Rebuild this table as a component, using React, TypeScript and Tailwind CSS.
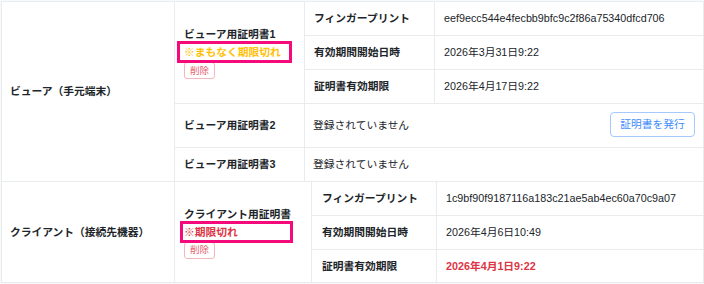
import React from 'react';

type Field = { label: string; value: string; danger?: boolean };

type Cert = {
  name: string;
  notice?: { text: string; tone: 'warn' | 'expired' };
  fields?: Field[];
};

const viewerCerts: Cert[] = [
  {
    name: 'ビューア用証明書1',
    notice: { text: '※まもなく期限切れ', tone: 'warn' },
    fields: [
      { label: 'フィンガープリント', value: 'eef9ecc544e4fecbb9bfc9c2f86a75340dfcd706' },
      { label: '有効期間開始日時', value: '2026年3月31日9:22' },
      { label: '証明書有効期限', value: '2026年4月17日9:22' },
    ],
  },
  { name: 'ビューア用証明書2' },
  { name: 'ビューア用証明書3' },
];

const clientCert: Cert = {
  name: 'クライアント用証明書',
  notice: { text: '※期限切れ', tone: 'expired' },
  fields: [
    { label: 'フィンガープリント', value: '1c9bf90f9187116a183c21ae5ab4ec60a70c9a07' },
    { label: '有効期間開始日時', value: '2026年4月6日10:49' },
    { label: '証明書有効期限', value: '2026年4月1日9:22', danger: true },
  ],
};

const font = { fontFamily: '"Liberation Sans", "Noto Sans CJK JP", sans-serif' };

function DeleteButton() {
  return (
    <button className="flex h-[17px] w-[31px] items-center justify-center rounded-[3px] border border-[#f3b7bd] text-[9.5px] leading-none text-[#e4606d]">
      削除
    </button>
  );
}

// 証明書名 + 状態 + 削除ボタン
function CertName({ cert, markClass }: { cert: Cert; markClass: string }) {
  return (
    <div className="flex flex-col items-start">
      <div className="h-[16px] font-bold leading-[16px]">{cert.name}</div>
      {cert.notice && (
        <div
          className={
            'relative mt-[2px] h-[16px] font-bold leading-[16px] ' +
            (cert.notice.tone === 'warn' ? 'text-[#ffc107]' : 'text-[#dc3545]')
          }
        >
          {cert.notice.text}
          <div className={'pointer-events-none absolute border-[3px] border-[#f50a7c] ' + markClass} />
        </div>
      )}
      <div className="mt-[2px]">
        <DeleteButton />
      </div>
    </div>
  );
}

function FieldRows({ fields, labelWidth }: { fields: Field[]; labelWidth: string }) {
  return (
    <div className="flex flex-1 flex-col">
      {fields.map((f, i) => {
        const last = i === fields.length - 1;
        return (
          <div
            key={f.label}
            className={'flex ' + (last ? 'flex-1' : 'h-[34px] border-b border-[#e9ecef]')}
          >
            <div className={'flex items-center border-r border-[#e9ecef] pl-[9px] font-bold ' + labelWidth}>
              {f.label}
            </div>
            <div
              className={
                'flex flex-1 items-center pl-[9px] ' + (f.danger ? 'font-bold text-[#dc3545]' : '')
              }
            >
              {f.value}
            </div>
          </div>
        );
      })}
    </div>
  );
}

export default function App() {
  return (
    <div className="h-[284px] w-[704px] bg-[#f8f9fa] pt-px pl-px" style={font}>
      <div className="w-[703px] border border-[#e9ecef] bg-white text-[10.75px] text-[#212529]">
        {/* ビューア */}
        <div className="flex border-b border-[#e9ecef]">
          <div className="flex w-[173px] items-center border-r border-[#e9ecef] pl-[8px] font-bold">
            ビューア（手元端末）
          </div>
          <div className="flex flex-1 flex-col">
            <div className="flex h-[102px] border-b border-[#e9ecef]">
              <div className="flex w-[130px] items-center border-r border-[#e9ecef] pl-[9px]">
                <CertName cert={viewerCerts[0]} markClass="-left-[7px] -top-[3px] h-[22px] w-[115px]" />
              </div>
              <FieldRows fields={viewerCerts[0].fields!} labelWidth="w-[130px]" />
            </div>
            <div className="flex h-[44px] border-b border-[#e9ecef]">
              <div className="flex w-[130px] items-center border-r border-[#e9ecef] pl-[9px] font-bold">
                {viewerCerts[1].name}
              </div>
              <div className="flex flex-1 items-center justify-between pl-[8px] pr-[8px]">
                <span>登録されていません</span>
                <button className="mb-[2px] h-[25px] w-[85px] rounded-[4px] border border-[#a6c9fb] text-[10.75px] text-[#3d8bfd]">
                  証明書を発行
                </button>
              </div>
            </div>
            <div className="flex h-[33px]">
              <div className="flex w-[130px] items-center border-r border-[#e9ecef] pl-[9px] font-bold">
                {viewerCerts[2].name}
              </div>
              <div className="flex flex-1 items-center pl-[8px]">登録されていません</div>
            </div>
          </div>
        </div>

        {/* クライアント */}
        <div className="flex h-[100px]">
          <div className="flex w-[173px] items-center border-r border-[#e9ecef] pl-[8px] font-bold">
            クライアント（接続先機器）
          </div>
          <div className="flex w-[137px] items-center border-r border-[#e9ecef] pl-[9px]">
            <CertName cert={clientCert} markClass="-left-[4px] -top-[3px] h-[22px] w-[113px]" />
          </div>
          <FieldRows fields={clientCert.fields!} labelWidth="w-[125px] pl-[10px]" />
        </div>
      </div>
    </div>
  );
}
